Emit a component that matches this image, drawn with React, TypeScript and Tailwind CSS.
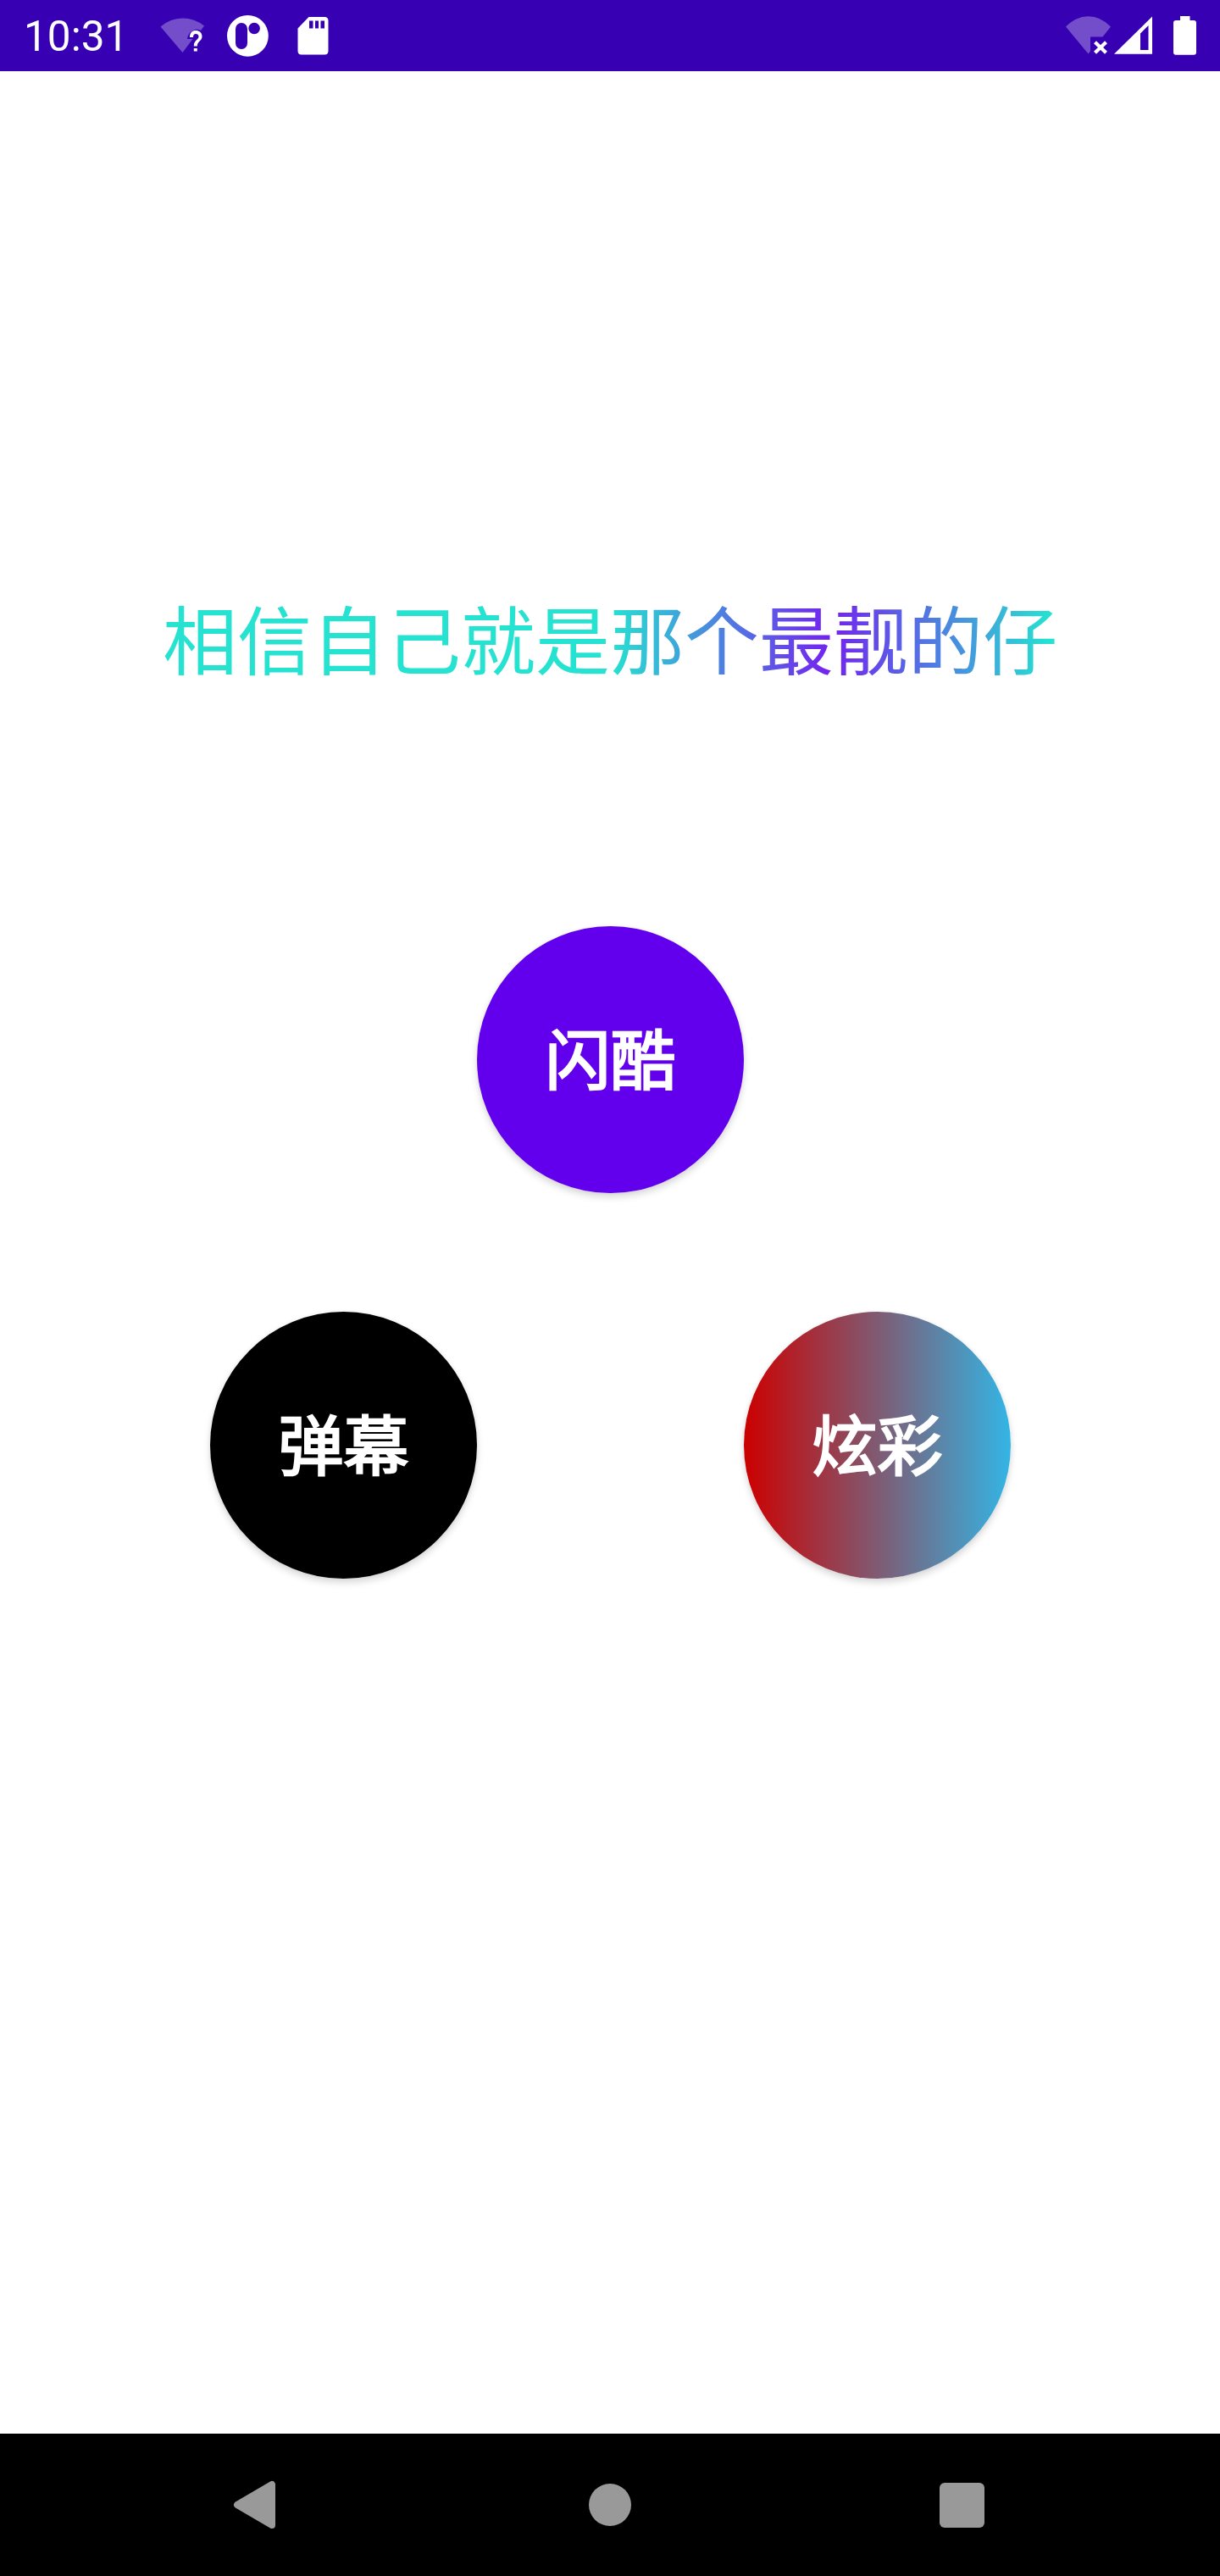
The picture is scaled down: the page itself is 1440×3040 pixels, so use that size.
import type { ReactNode } from "react";

function StatusBar() {
  return (
    <header className="flex h-[84px] shrink-0 items-center justify-between bg-[#3700b3] text-white">
      <div className="flex h-full items-center">
        <time className="w-[181px] pl-7 pt-[3px] font-[Roboto,sans-serif] text-[49.5px] leading-none">10:31</time>
        <svg className="h-[84px] w-[70px]" viewBox="181 0 70 84" fill="currentColor">
          <path opacity=".3" d="M189.5 31.5Q201 21.5 215.5 21.5Q229.500 21.500 241 30.500L237 36Q232 33.500 227 36.500Q221.500 39.500 221 46H227.500L215.500 62Z" />
          <path d="M224 44C224 38.500 227 36 231 36S238.500 38.500 238.500 43C238.500 48.500 232.800 48.500 232.800 54.500H228.800C228.800 47 234.500 47.300 234.500 43C234.500 41 233 40 231 40S228 41.500 228 44ZM228.800 57H232.800V60.500H228.800Z" />
        </svg>
        <svg className="h-[84px] w-[80px]" viewBox="251 0 80 84" fill="currentColor">
          <path fillRule="evenodd" d="M268 42.300a24.400 24.400 0 1 0 48.800 0a24.400 24.400 0 1 0-48.800 0ZM278 34a7 7 0 0 1 14 0V51a7 7 0 0 1-14 0ZM293.300 33.500a6.800 6.800 0 1 0 13.600 0a6.800 6.800 0 1 0-13.600 0Z" />
        </svg>
        <svg className="h-[84px] w-[70px]" viewBox="331 0 70 84" fill="currentColor">
          <path fillRule="evenodd" d="M364.500 20H383Q387.500 20 387.500 24.500V60Q387.500 64.500 383 64.500H356Q351.500 64.500 351.500 60V33.500ZM365 24.500V33.500H369.500V24.500ZM372 24.500V33.500H376V24.500ZM378.500 24.500V33.500H383V24.500Z" />
        </svg>
      </div>
      <svg className="h-[84px] w-[184px]" viewBox="1256 0 184 84" fill="currentColor">
        <path opacity=".3" d="M1258 31.500Q1270 19.300 1284.500 19.300T1311 31.500L1301.500 43.500H1287V60.500L1284.500 63.500Z" />
        <path d="M1292.500 49.700l6.500 6.300l6.500-6.300M1292.500 62.300l6.500-6.300l6.500 6.300" fill="none" stroke="currentColor" strokeWidth="4.200" />
        <path fillRule="evenodd" d="M1315 63.800L1360 19.500V63.800ZM1346 39.500V59H1355.500V30Z" />
        <path d="M1393 19H1404.500V24H1409Q1412 24 1412 27V61.500Q1412 64.800 1409 64.800H1388Q1385 64.800 1385 61.500V27Q1385 24 1388 24H1393Z" />
      </svg>
    </header>
  );
}

function RoundButton({ children, fill }: { children: ReactNode; fill: string }) {
  return (
    <button
      className={`flex size-[315px] items-center justify-center rounded-full pb-2 text-[77px] leading-none font-normal text-white [-webkit-text-stroke:2.4px_white] shadow-[0_5px_9px_rgba(0,0,0,0.15),0_0_5px_rgba(0,0,0,0.05)] ${fill}`}
    >
      {children}
    </button>
  );
}

function NavigationBar() {
  return (
    <nav className="grid h-[168px] shrink-0 grid-cols-3 items-center bg-black pr-[278px] pl-[275px] text-[#999999]">
      <svg className="h-[60px] w-[50px]" viewBox="0 0 50 60" fill="currentColor" stroke="currentColor" strokeWidth="8" strokeLinejoin="round">
        <path d="M5 30L46 6V54Z" />
      </svg>
      <div className="ml-[3px] size-[50px] justify-self-center rounded-full bg-[#999999]" />
      <div className="size-[53px] justify-self-end rounded-md bg-[#999999]" />
    </nav>
  );
}

export default function App() {
  return (
    <div className="flex h-[3040px] w-[1440px] flex-col bg-white font-['Noto_Sans_CJK_SC',sans-serif]">
      <StatusBar />
      <main className="flex flex-1 flex-col items-center pt-[619px]">
        <h1 className="h-[104px] bg-linear-[90deg,#26e2d0_528px,#7422f0_788px,#26e2d0_1048px] bg-clip-text text-[88px] leading-[96px] whitespace-nowrap text-transparent">
          相信自己就是那个最靓的仔
        </h1>
        <div className="mt-[286px] ml-[1px]">
          <RoundButton fill="bg-[#6200ee]">闪酷</RoundButton>
        </div>
        <div className="mt-[140px] ml-[1px] flex gap-[315px]">
          <RoundButton fill="bg-black">弹幕</RoundButton>
          <RoundButton fill="bg-linear-[90deg,#cc0000,#33b5e5]">炫彩</RoundButton>
        </div>
      </main>
      <NavigationBar />
    </div>
  );
}
